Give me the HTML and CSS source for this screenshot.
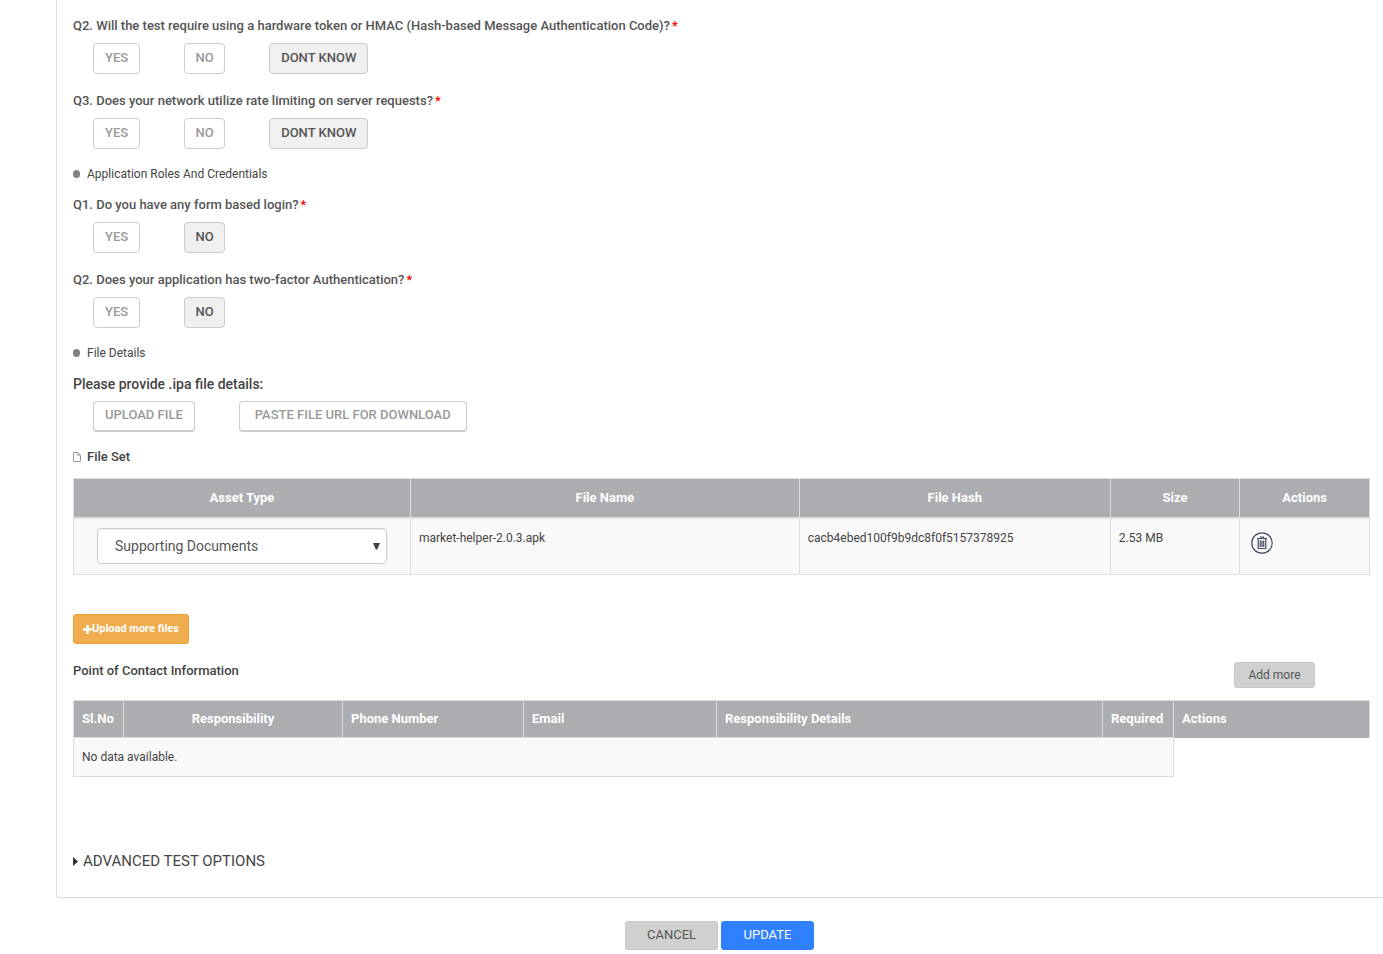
FILE: index.html
```
<!DOCTYPE html>
<html lang="en">
<head>
<meta charset="utf-8">
<title>Test Request</title>
<link rel="stylesheet" href="styles.css">
</head>
<body>
<form class="page">
  <section class="card">
    <div class="question">
      <p class="question-text" id="q-token">Q2. Will the test require using a hardware token or HMAC (Hash-based Message Authentication Code)?<span class="required">*</span></p>
      <div class="choices" role="group" aria-labelledby="q-token">
        <button type="button" class="choice">YES</button>
        <button type="button" class="choice">NO</button>
        <button type="button" class="choice selected" aria-pressed="true">DONT KNOW</button>
      </div>
    </div>
    <div class="question">
      <p class="question-text" id="q-rate">Q3. Does your network utilize rate limiting on server requests?<span class="required">*</span></p>
      <div class="choices" role="group" aria-labelledby="q-rate">
        <button type="button" class="choice">YES</button>
        <button type="button" class="choice">NO</button>
        <button type="button" class="choice selected" aria-pressed="true">DONT KNOW</button>
      </div>
    </div>

    <h2 class="section-title"><span class="bullet"></span>Application Roles And Credentials</h2>
    <div class="question">
      <p class="question-text" id="q-login">Q1. Do you have any form based login?<span class="required">*</span></p>
      <div class="choices" role="group" aria-labelledby="q-login">
        <button type="button" class="choice">YES</button>
        <button type="button" class="choice selected" aria-pressed="true">NO</button>
      </div>
    </div>
    <div class="question">
      <p class="question-text" id="q-factor">Q2. Does your application has two-factor Authentication?<span class="required">*</span></p>
      <div class="choices" role="group" aria-labelledby="q-factor">
        <button type="button" class="choice">YES</button>
        <button type="button" class="choice selected" aria-pressed="true">NO</button>
      </div>
    </div>

    <h2 class="section-title"><span class="bullet"></span>File Details</h2>
    <div class="question">
      <p class="question-text prompt" id="q-file">Please provide .ipa file details:</p>
      <div class="choices" role="group" aria-labelledby="q-file">
        <button type="button" class="choice raised">UPLOAD FILE</button>
        <button type="button" class="choice raised wide">PASTE FILE URL FOR DOWNLOAD</button>
      </div>
    </div>

    <h2 class="section-title strong">
      <svg class="file-icon" viewBox="0 0 8 10" aria-hidden="true"><path d="M.5.5h4.3l2.7 2.7v6.3h-7zM4.8.5v2.7h2.7"/></svg>File Set
    </h2>
    <table class="grid files">
      <thead>
        <tr><th class="w26">Asset Type</th><th class="w30">File Name</th><th class="w24">File Hash</th><th class="w10">Size</th><th class="w10">Actions</th></tr>
      </thead>
      <tbody>
        <tr>
          <td class="asset">
            <div class="select-wrap">
              <select class="select" aria-label="Asset Type"><option>Supporting Documents</option></select>
              <svg class="caret" viewBox="0 0 7 8" aria-hidden="true"><path d="M0 1h7L4.2 7.5H2.8z"/></svg>
            </div>
          </td>
          <td>market-helper-2.0.3.apk</td>
          <td>cacb4ebed100f9b9dc8f0f5157378925</td>
          <td>2.53 MB</td>
          <td class="action">
            <button type="button" class="icon-button" aria-label="Delete file">
              <svg class="trash" viewBox="0 0 22 22" aria-hidden="true">
                <circle cx="11" cy="11" r="10.2"/>
                <path d="M6 6.5h10M9.5 6V5h3v1M7.2 7v9.5h7.6V7M9.3 8.5v6.5M11 8.5v6.5M12.7 8.5v6.5"/>
              </svg>
            </button>
          </td>
        </tr>
      </tbody>
    </table>

    <button type="button" class="upload-more"><svg class="plus" viewBox="0 0 9 9" aria-hidden="true"><path d="M3.3 0h2.4v3.3H9v2.4H5.7V9H3.3V5.7H0V3.3h3.3z"/></svg>Upload more files</button>

    <div class="contact-head">
      <h2 class="section-title strong">Point of Contact Information</h2>
      <button type="button" class="add-more">Add more</button>
    </div>
    <table class="grid contacts">
      <colgroup><col class="c-no"><col class="c-resp"><col class="c-phone"><col class="c-email"><col><col class="c-req"><col class="c-act"></colgroup>
      <thead>
        <tr><th>Sl.No</th><th class="center">Responsibility</th><th>Phone Number</th><th>Email</th><th>Responsibility Details</th><th>Required</th><th class="open">Actions</th></tr>
      </thead>
      <tbody>
        <tr><td colspan="6">No data available.</td></tr>
      </tbody>
    </table>

    <details class="advanced">
      <summary><svg class="arrow" viewBox="0 0 5 9" aria-hidden="true"><path d="M0 0l5 4.5L0 9z"/></svg>ADVANCED TEST OPTIONS</summary>
    </details>
  </section>

  <footer class="footer">
    <button type="button" class="footer-button">CANCEL</button>
    <button type="submit" class="footer-button update">UPDATE</button>
  </footer>
</form>
</body>
</html>
```
FILE: styles.css
```
* { box-sizing: border-box; }

body {
  margin: 0;
  background: #fff;
  color: #444;
  font-family: Roboto, "Liberation Sans", Arial, sans-serif;
  font-size: 13px;
  line-height: 20px;
}

button, select { font: inherit; cursor: pointer; }
p, h2 { margin: 0; }

.page { padding-left: 56px; }

.card {
  padding: 16px 13px 26px 16px;
  border: solid #ddd;
  border-width: 0 0 1px 1px;
  border-bottom-left-radius: 4px;
}

.question { margin-bottom: 17px; }
.question-text { font-weight: 500; color: #555; }
.prompt { font-size: 14px; color: #444; }
.required { margin-left: 2px; color: #f00; }

.choices {
  display: flex;
  gap: 44px;
  padding: 7px 0 0 20px;
}

.choice {
  height: 31px;
  padding: 0 10px 2px;
  min-width: 41px;
  border: 1px solid #ccc;
  border-radius: 4px;
  background: #fff;
  color: #999;
  font-weight: 500;
}
.choice:first-child { padding: 0 11px 2px; }
.choice:nth-child(3) { padding: 0 11px 2px; }
.choice.selected { background: #f0f0f0; color: #555; }
.choice.raised { border-bottom-width: 2px; }
.choice.wide { padding: 0 15px 2px; }

.section-title {
  display: flex;
  align-items: center;
  margin: -2px 0 11px;
  font-size: 12px;
  font-weight: 400;
}
.section-title.strong { font-size: 13px; font-weight: 500; }
.bullet {
  width: 7px;
  height: 8px;
  margin-right: 7px;
  border-radius: 4px;
  background: #808285;
}
.file-icon {
  width: 8px;
  height: 10px;
  margin-right: 6px;
  fill: none;
  stroke: #999;
}

.grid {
  width: 100%;
  border-collapse: collapse;
  table-layout: fixed;
}
.grid th, .grid td {
  padding: 9px 8px;
  border: 1px solid #ddd;
  text-align: left;
  vertical-align: top;
}
.grid th { background: #acadb1; color: #fff; font-weight: 700; }
.grid td { background: #f9f9f9; font-size: 12px; }

.files th { border-bottom-width: 2px; text-align: center; }
.w26 { width: 26%; }
.w30 { width: 30%; }
.w24 { width: 24%; }
.w10 { width: 10%; }
.files .asset { padding: 9px 23px 10px; }
.files .action { padding: 13px 11px 0; }

.select-wrap { position: relative; }
.select {
  display: block;
  width: 100%;
  height: 36px;
  padding: 0 17px;
  appearance: none;
  border: 1px solid #ccc;
  border-radius: 4px;
  background: #fff;
  box-shadow: inset 0 1px 1px rgba(0, 0, 0, .08);
  color: #555;
  font-size: 14px;
}
.caret {
  position: absolute;
  top: 14px;
  right: 7px;
  width: 7px;
  height: 8px;
  fill: #444;
  pointer-events: none;
}

.icon-button {
  display: block;
  padding: 0;
  border: 0;
  background: none;
}
.trash {
  display: block;
  width: 22px;
  height: 22px;
  fill: none;
  stroke: #444b60;
  stroke-width: 1.2;
}

.upload-more {
  display: flex;
  align-items: center;
  height: 30px;
  margin: 39px 0 17px;
  padding: 0 9px;
  border: 1px solid #eea236;
  border-radius: 3px;
  background: #f0ad4e;
  color: #fff;
  font-size: 11px;
  font-weight: 700;
}
.plus { width: 9px; height: 9px; fill: #fff; }

.contact-head {
  display: flex;
  justify-content: space-between;
  margin-bottom: 12px;
  padding-right: 55px;
}
.contact-head .section-title { margin: 0 0 7px; }
.add-more {
  width: 81px;
  height: 26px;
  margin-top: 1px;
  padding: 0;
  border: 1px solid #c8c8c8;
  border-radius: 3px;
  background: #d0d0d0;
  color: #555;
  font-size: 12px;
}

.c-no { width: 50px; }
.c-resp { width: 219px; }
.c-phone { width: 181px; }
.c-email { width: 193px; }
.c-req { width: 71px; }
.c-act { width: 196px; }
.contacts th { padding: 8px; }
.contacts .center { text-align: center; }
.contacts .open { border-bottom: 0; }

.advanced { margin-top: 74px; font-size: 15px; }
.advanced summary {
  display: flex;
  align-items: center;
  cursor: pointer;
  list-style: none;
}
.arrow { width: 5px; height: 9px; margin-right: 5px; fill: #333; }

.footer {
  display: flex;
  justify-content: center;
  gap: 3px;
  padding: 23px 0 3px;
}
.footer-button {
  width: 93px;
  height: 29px;
  padding: 0 0 2px;
  border: 1px solid #c8c8c8;
  border-radius: 3px;
  background: #d0d0d0;
  color: #555;
}
.footer-button.update { border-color: #2e80ff; background: #2e80ff; color: #fff; }
```
